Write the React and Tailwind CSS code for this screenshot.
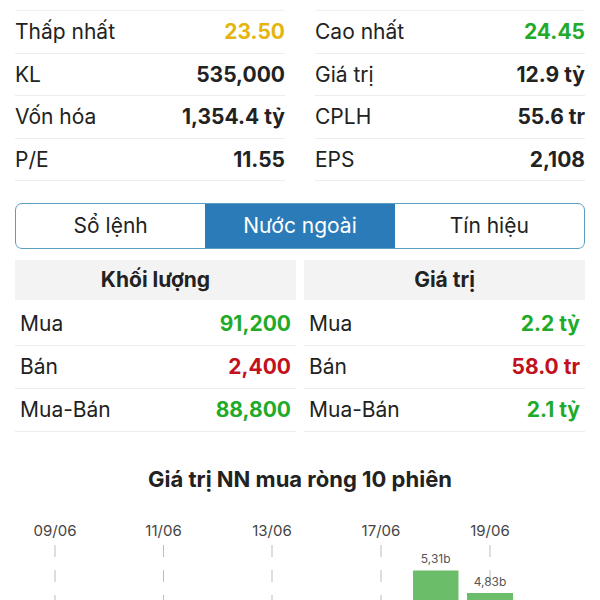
import React from "react";

const stats = [
  [["Thấp nhất", "23.50", "text-[#e5b50f]"], ["Cao nhất", "24.45", "text-[#22aa2e]"]],
  [["KL", "535,000"], ["Giá trị", "12.9 tỷ"]],
  [["Vốn hóa", "1,354.4 tỷ"], ["CPLH", "55.6 tr"]],
  [["P/E", "11.55"], ["EPS", "2,108"]],
];

const foreign = {
  vol: [["Mua", "91,200", "text-[#1fab29]"], ["Bán", "2,400", "text-[#c2111c]"], ["Mua-Bán", "88,800", "text-[#1fab29]"]],
  val: [["Mua", "2.2 tỷ", "text-[#1fab29]"], ["Bán", "58.0 tr", "text-[#c2111c]"], ["Mua-Bán", "2.1 tỷ", "text-[#1fab29]"]],
};

const StatRow = ({ label, value, color }) => (
  <div className="flex h-[42.5px] items-center justify-between border-b border-[#ececec]">
    <span className="text-[21px] text-[#222]">{label}</span>
    <span className={"text-[21px] font-bold " + (color || "text-[#222]")}>{value}</span>
  </div>
);

const ForeignCol = ({ title, rows }) => (
  <div className="flex-1">
    <div className="flex h-[40px] items-center justify-center bg-[#f3f3f3] text-[21px] font-bold text-[#222]">
      {title}
    </div>
    <div className="mt-[3px]">
      {rows.map(([l, v, c]) => (
        <div key={l} className="flex h-[43px] items-center justify-between border-b border-[#ececec] px-[5px]">
          <span className="text-[21px] text-[#222]">{l}</span>
          <span className={"text-[21px] font-bold " + c}>{v}</span>
        </div>
      ))}
    </div>
  </div>
);

const Chart = () => {
  const dates = [["09/06", 55], ["11/06", 163.5], ["13/06", 272], ["17/06", 381], ["19/06", 490]];
  return (
    <svg width="600" height="95" viewBox="0 515 600 95" className="block">
      {dates.map(([d, x]) => (
        <g key={d}>
          <text x={x} y="535.5" textAnchor="middle" fontSize="15" fill="#444" fontFamily="Inter, sans-serif">{d}</text>
          <line x1={x} y1="545" x2={x} y2="610" stroke="#bdbdbd" strokeWidth="1" strokeDasharray="12 13" />
        </g>
      ))}
      <rect x="413" y="570.5" width="45.5" height="40" fill="#6cbd69" />
      <text x="435.7" y="562.5" textAnchor="middle" fontSize="12" fill="#555" fontFamily="Inter, sans-serif">5,31b</text>
      <rect x="467" y="593" width="46" height="20" fill="#6cbd69" />
      <text x="490" y="585.5" textAnchor="middle" fontSize="12" fill="#555" fontFamily="Inter, sans-serif">4,83b</text>
    </svg>
  );
};

export default function App() {
  return (
    <div className="h-[600px] w-[600px] overflow-hidden bg-white font-['Inter',sans-serif]">
      <div className="flex gap-[30px] px-[15px] pt-[10px]">
        {[0, 1].map((col) => (
          <div key={col} className="flex-1 border-t border-[#f1f1f1]">
            {stats.map((r) => (
              <StatRow key={r[col][0]} label={r[col][0]} value={r[col][1]} color={r[col][2]} />
            ))}
          </div>
        ))}
      </div>

      <div className="mx-[15px] mt-[22px] flex h-[46px] overflow-hidden rounded-[7px] border-[1.5px] border-[#5b9cc4]">
        <div className="flex flex-1 items-center justify-center text-[21px] text-[#222]">Sổ lệnh</div>
        <div className="flex flex-1 items-center justify-center bg-[#2b7bb9] text-[21px] text-white">Nước ngoài</div>
        <div className="flex flex-1 items-center justify-center text-[21px] text-[#222]">Tín hiệu</div>
      </div>

      <div className="mx-[15px] mt-[11px] flex gap-[8px]">
        <ForeignCol title="Khối lượng" rows={foreign.vol} />
        <ForeignCol title="Giá trị" rows={foreign.val} />
      </div>

      <div className="mt-[31px] text-center text-[22px] font-bold text-[#222]">Giá trị NN mua ròng 10 phiên</div>
      <div className="mt-[19px]">
        <Chart />
      </div>
    </div>
  );
}
